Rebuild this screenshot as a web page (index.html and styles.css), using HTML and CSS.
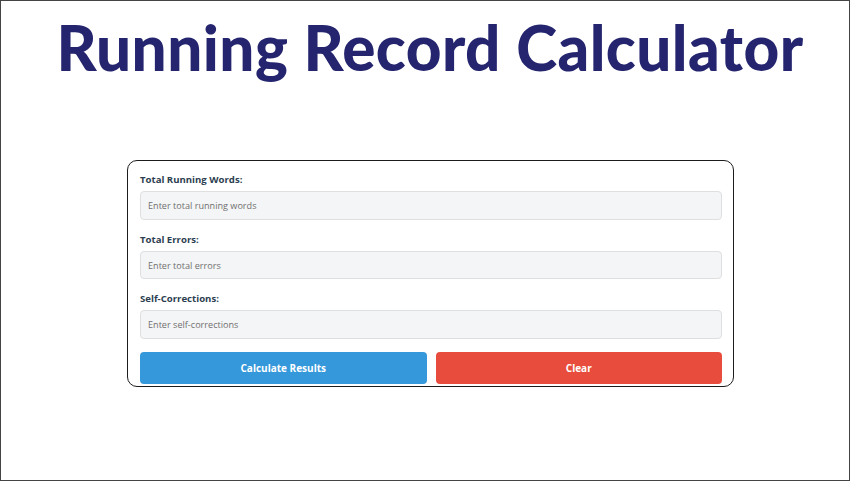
FILE: index.html
```html
<!DOCTYPE html>
<html lang="en">

<head>
  <meta charset="UTF-8">
  <meta name="viewport" content="width=device-width, initial-scale=1.0">
  <title>Running Record Calculator</title>
  <link rel="stylesheet" href="styles.css">
</head>

<body>
  <div class="frame">
    <h1 class="page-title">Running Record Calculator</h1>

    <form class="calc-card">
      <div class="field">
        <label class="field-label" for="totalWords">Total Running Words:</label>
        <input class="field-input" type="number" id="totalWords" placeholder="Enter total running words">
      </div>
      <div class="field">
        <label class="field-label" for="totalErrors">Total Errors:</label>
        <input class="field-input" type="number" id="totalErrors" placeholder="Enter total errors">
      </div>
      <div class="field">
        <label class="field-label" for="selfCorrections">Self-Corrections:</label>
        <input class="field-input" type="number" id="selfCorrections" placeholder="Enter self-corrections">
      </div>
      <div class="btn-row">
        <button type="button" class="btn btn-calc">Calculate Results</button>
        <button type="reset" class="btn btn-clear">Clear</button>
      </div>
    </form>
  </div>
</body>

</html>
```

FILE: styles.css
```css
* {
  box-sizing: border-box;
}

body {
  margin: 0;
  background: #fff;
  font-family: "Open Sans", "Noto Sans", sans-serif;
}

.frame {
  height: 481px;
  border: 1.5px solid #444;
  padding: 9px 0 0 10px;
  display: flex;
  flex-direction: column;
  align-items: center;
}

.page-title {
  margin: 0;
  font-family: Lato, sans-serif;
  font-weight: 900;
  font-size: 62px;
  line-height: 1.2;
  letter-spacing: 0.45px;
  color: #25256f;
}

.calc-card {
  width: 607px;
  margin-top: 75.5px;
  border: 1.5px solid #1c1c1c;
  border-radius: 10px;
  padding: 12.5px 10.5px 2.5px 12.5px;
}

.field {
  margin-bottom: 13px;
}

.field-label {
  display: block;
  font-size: 9.6px;
  line-height: 14px;
  font-weight: 700;
  color: #2c3e50;
  margin-bottom: 4px;
}

.field-input {
  display: block;
  width: 100%;
  height: 28.5px;
  padding: 0 7px;
  border: 1px solid #dedfe0;
  border-radius: 4px;
  background: #f4f5f6;
  font-family: inherit;
  font-size: 9.1px;
  color: #333;
}

.field-input::placeholder {
  color: #707070;
}

.btn-row {
  display: flex;
  gap: 9px;
  margin-top: 2px;
}

.btn {
  flex: 1;
  height: 32px;
  border: none;
  border-radius: 4px;
  color: #fff;
  font-family: inherit;
  font-size: 10px;
  font-weight: 700;
}

.btn-calc {
  background: #3498db;
}

.btn-clear {
  background: #e74c3c;
}
```
